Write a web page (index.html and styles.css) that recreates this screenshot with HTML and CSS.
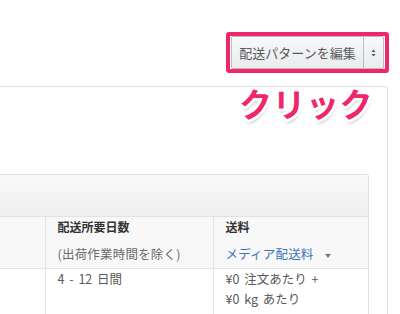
FILE: index.html
```html
<!doctype html>
<html>
  <head>
    <title>配送設定</title>
    <link rel="stylesheet" href="styles.css">
  </head>
  <body>
    <div class="page">
      <div class="toolbar">
        <div class="highlight">
          <div class="btn-group">
            <button type="button" class="btn btn-main">配送パターンを編集</button>
            <button type="button" class="btn btn-caret">
              <svg width="5" height="8" viewBox="0 0 5 8">
                <path d="M0.5 3L2.5 0.5L4.5 3Z M0.5 5L2.5 7.5L4.5 5Z" fill="#555"/>
              </svg>
            </button>
          </div>
        </div>
      </div>
      <div class="panel">
        <span class="callout">クリック</span>
        <div class="rates">
          <div class="rates-head"></div>
          <table class="rates-table">
            <colgroup>
              <col class="col-region">
              <col class="col-days">
              <col class="col-fee">
            </colgroup>
            <thead>
              <tr>
                <th></th>
                <th>
                  <div class="th-title">配送所要日数</div>
                  <div class="th-sub">(出荷作業時間を除く)</div>
                </th>
                <th>
                  <div class="th-title">送料</div>
                  <div class="th-sub">
                    <a class="link" href="#">メディア配送料</a>
                    <span class="caret"></span>
                  </div>
                </th>
              </tr>
            </thead>
            <tbody>
              <tr>
                <td></td>
                <td>4 - 12 日間</td>
                <td>¥0 注文あたり +<br>¥0 kg あたり</td>
              </tr>
            </tbody>
          </table>
        </div>
      </div>
    </div>
  </body>
</html>
```

FILE: styles.css
```css
html, body {
  margin: 0;
  height: 100%;
  overflow: hidden;
}
body {
  background: #fff;
  font-family: "Noto Sans CJK JP", "Noto Sans", sans-serif;
  font-size: 12.5px;
  color: #333;
}
.page {
  padding: 32px 11px 0 0;
}
.toolbar {
  display: flex;
  justify-content: flex-end;
}
.highlight {
  border: 4px solid #f0266b;
  border-radius: 3px;
  padding: 0 1px;
}
.btn-group {
  display: flex;
}
.btn {
  font: inherit;
  height: 33px;
  margin: 0;
  border: 1px solid #b8bbc0;
  background: linear-gradient(#f7f8fa, #e9ebee);
  color: #5a5a5a;
  cursor: pointer;
}
.btn-main {
  width: 133px;
  padding: 0 7px;
  font-size: 13px;
  border-radius: 2px 0 0 2px;
}
.btn-caret {
  width: 20px;
  padding: 0;
  border-left: 0;
  border-radius: 0 2px 2px 0;
  display: flex;
  align-items: center;
  justify-content: center;
}
.panel {
  position: relative;
  margin: 13px 1px 0 -30px;
  padding: 87px 18px 0 18px;
  border: 1px solid #dedede;
  border-bottom: 0;
  border-radius: 4px 4px 0 0;
  height: 140px;
}
.callout {
  position: absolute;
  top: -2px;
  right: 14px;
  font-size: 33px;
  font-weight: bold;
  letter-spacing: 0.5px;
  line-height: 1.1;
  color: #f0266b;
  text-shadow:
    3px 0 0 #fff, -3px 0 0 #fff, 0 3px 0 #fff, 0 -3px 0 #fff,
    2px 2px 0 #fff, -2px -2px 0 #fff, 2px -2px 0 #fff, -2px 2px 0 #fff,
    1px 4px 3px rgba(0, 0, 0, 0.22);
}
.rates {
  border: 1px solid #dedede;
  border-bottom: 0;
  border-radius: 3px 3px 0 0;
}
.rates-head {
  height: 41px;
  background: linear-gradient(#f9f9f9, #efefef);
  border-bottom: 1px solid #e2e2e2;
}
.rates-table {
  width: 100%;
  table-layout: fixed;
  border-collapse: collapse;
}
.col-region {
  width: 55px;
}
.col-days {
  width: 168px;
}
.rates-table th,
.rates-table td {
  text-align: left;
  vertical-align: top;
  padding: 0 12px;
  border-left: 1px solid #e3e3e3;
}
.rates-table th:first-child,
.rates-table td:first-child {
  border-left: 0;
}
.rates-table th {
  height: 51px;
  background: #f8f8f8;
  border-bottom: 1px solid #e3e3e3;
  font-weight: normal;
}
.th-title {
  font-size: 12px;
  font-weight: bold;
  line-height: 20px;
  color: #333;
}
.th-sub {
  margin-top: 7px;
  line-height: 20px;
  color: #6a6a6a;
  letter-spacing: 0.2px;
  white-space: nowrap;
}
.link {
  color: #3a72ba;
  text-decoration: none;
}
.caret {
  display: inline-block;
  margin-left: 8px;
  border-left: 3px solid transparent;
  border-right: 3px solid transparent;
  border-top: 4px solid #777;
  vertical-align: middle;
}
.rates-table td {
  line-height: 20px;
  padding-top: 0;
  color: #5a5a5a;
  height: 46px;
  word-spacing: 2px;
}
```
